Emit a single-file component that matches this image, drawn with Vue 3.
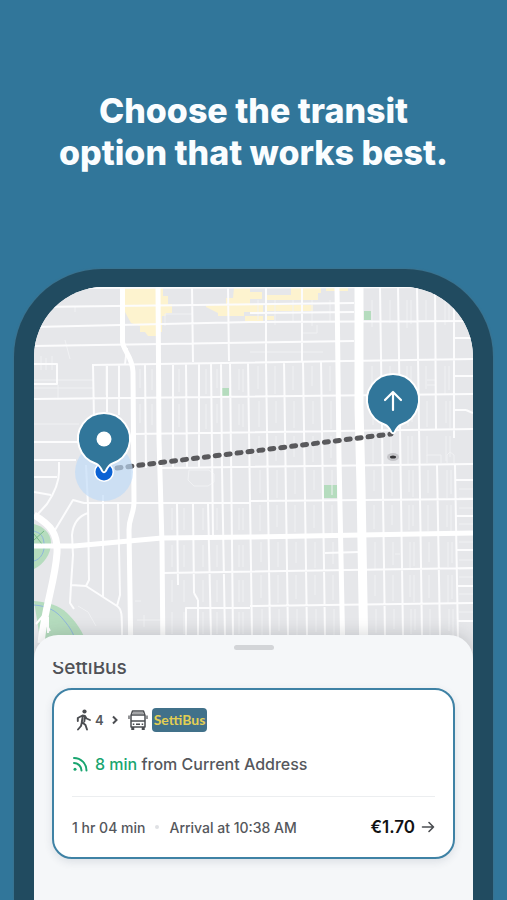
<template>
  <main class="promo">
    <h1 class="headline">Choose the transit<br />option that works best.</h1>

    <div class="phone">
      <div class="screen">
        <!-- Map -->
        <svg class="map" viewBox="34 287 439 372" role="img" aria-label="Route map">
          <rect x="34" y="287" width="439" height="372" fill="#e6e7ea" />

          <!-- Commercial areas -->
          <g fill="#fdf3cf">
            <path d="M125 288h38v8h5v8h4v9h-6v3h-4v16h-6v4h-8l-3-4h-5v-6l-9-3-6-11z" />
            <path d="M234 288h16v18h7v6h-13v4h-26v-3l-12-6v-2h20v-7h7z" />
            <path d="M267 295h24v-7h30v5h-3v7h-51zM267 305h46v6h-46zM250 305h13v7h-13zM245 316h18v5h-18zM267 316h7v4h-7zM326 288h22v3h-22zM250 292h12v7h-12z" />
          </g>

          <!-- Parks -->
          <g fill="#b5dcbe">
            <rect x="222" y="388" width="7" height="8" />
            <rect x="364" y="311" width="7" height="9" />
            <rect x="324" y="485" width="13" height="13" />
            <path d="M34 524c8 2 17 8 17 19s-7 21-17 26z" />
            <path d="M34 601c13 1 25 4 33 12s14 16 18 26H40z" />
          </g>
          <g fill="none" stroke="#8fb6dd" stroke-width="1">
            <path d="M34 561c7-2 11-9 10-18s-5-10-10-12" />
            <path d="M34 605c14 1 22 6 28 13s10 12 13 21" />
          </g>
          <path d="M34 540l10-9m-10 3l8 10" stroke="#77b989" fill="none" />

          <!-- Alleys -->
          <path class="alley" :d="alleys" />
          <path
            class="alley"
            d="M34 424h45M34 388h60M34 380h60M41 356v14M46 358v12M52 356v14M65 340l5 19M75 306v6M58 385v14M106 365v30M165 314h28M165 314v12M303 333h14v-8M250 352h73M189 470h20l5 4v8l-6 4h-14l-6-6zM427 463v-8h14v8M447 463v-8l3-3 4 3v8M427 380h8M427 385h8M78 606l10 6 8 14M137 620h23M144 615v12M395 554h5M135 601h6"
          />

          <!-- Streets -->
          <path class="street" :d="streets" />
          <path
            class="street"
            d="M34 364h23v20H34M34 460h42M34 442h48M59 462v10c0 14-8 26-12 32l-10 11M34 477h23M34 492l17 3M55 530l18-30 11 3h166M88 513c-9 3-15 11-16 22l1 20-2 30M86 465l2 40 1 75-3 6-15-1-1 18 4 6M103 495v102M118 502l2 93-3 11-31-20M117 606c5 3 5 8 5 30M127 348l-2 16M186 636v-28h64"
          />

          <!-- Avenues -->
          <g fill="none" stroke="#fff" stroke-linejoin="round">
            <path d="M122.5 287v55c1 9 10 15 10.500 30l1 130c0 12-5 15-5 28l2 129" stroke-width="5" />
            <path d="M158 287l1 152 3 105 1 115" stroke-width="5" />
            <path d="M337 287l2 170 4 202" stroke-width="5" />
            <path d="M359 287v120l2 80 3 172" stroke-width="9" />
            <path d="M34 546h40l88-8 89-1 110-2 112-2" stroke-width="5" />
            <path d="M34 515c17 10 24 19 23 38-2 29-12 52-16 90" stroke-width="7" />
          </g>
          <path d="M36 624l6-7 8 14M48 617v16" fill="none" stroke="#fff" stroke-width="2" />

          <!-- Route -->
          <path d="M117 468L391 434" stroke="#59595c" stroke-width="5" stroke-linecap="round" stroke-dasharray="4 7" />
          <ellipse cx="393" cy="457" rx="6" ry="4" fill="#a5a5a9" opacity="0.5" />
          <ellipse cx="393" cy="457" rx="3" ry="1.500" fill="#37373a" />

          <!-- Current position -->
          <circle cx="104" cy="472" r="29" fill="#bfdaf7" opacity="0.650" />
          <circle cx="104" cy="472" r="10" fill="#fff" />
          <circle cx="104" cy="472" r="8.500" fill="#0b62d4" />

          <!-- Pins -->
          <g v-for="pin in pins" :key="pin.id" :transform="`translate(${pin.x} ${pin.y})`">
            <path
              d="M-8 24.700A26 26 0 1 1 8 24.700C5 26 3.500 28.500 1.800 32Q0 34.500 -1.800 32C-3.500 28.500 -5 26 -8 24.700Z"
              fill="#31769a"
              stroke="#fff"
              stroke-width="2"
              stroke-linejoin="round"
            />
            <circle v-if="pin.id === 'start'" r="7.500" fill="#fff" />
            <path
              v-else
              d="M0 10V-8M-8 0L0 -8L8 0"
              fill="none"
              stroke="#fff"
              stroke-width="2.200"
              stroke-linecap="round"
              stroke-linejoin="round"
            />
          </g>
        </svg>

        <!-- Bottom sheet -->
        <section class="sheet">
          <button class="handle" aria-label="Resize panel"></button>
          <div class="list-title">
            <h2>SettiBus</h2>
          </div>

          <a class="trip" href="#">
            <div class="legs">
              <svg class="walk" viewBox="0 0 16 22">
                <circle cx="8.500" cy="2.500" r="2.100" fill="#4b4d51" />
                <path
                  d="M1.800 12V9L6.500 6.500L9 7L10.500 9.500L14 11M6.800 7L5.800 13L9.500 16L11 20.500M5.800 13.500L5 17L2 20.500M9 7.500L8.300 12.500"
                  fill="none"
                  stroke="#4b4d51"
                  stroke-width="1.900"
                  stroke-linecap="round"
                  stroke-linejoin="round"
                />
              </svg>
              <span class="walk-time">4</span>
              <svg class="chevron" viewBox="0 0 6 10">
                <path d="M1 1.500L4.500 5L1 8.500" fill="none" stroke="#4b4d51" stroke-width="2" />
              </svg>
              <svg class="bus" viewBox="0 0 20 20" fill="none" stroke="#4b4d51" stroke-width="1.500">
                <path d="M3 17V5.500L4.500 1H15.500L17 5.500V17Z" stroke-linejoin="round" />
                <path d="M3 5H17M3 11H17M8 14.300H12" />
                <path d="M1 5.500V9M19 5.500V9" stroke-width="1.200" />
                <path d="M4 17V19.200H5.500V17M14.500 17V19.200H16V17" />
                <path d="M4.800 14.300H6.300M13.700 14.300H15.200" />
                <path d="M5 3H15" stroke-width="1" />
              </svg>
              <span class="line-badge">SettiBus</span>
            </div>

            <div class="departure">
              <svg class="live" viewBox="0 0 16 16" fill="none" stroke="#18a56f" stroke-width="2">
                <path d="M2 2A12.500 12.500 0 0 1 14.500 14.500M2 7A7.500 7.500 0 0 1 9.500 14.500" stroke-linecap="round" />
                <circle cx="3" cy="13.200" r="1.500" fill="#18a56f" stroke="none" />
              </svg>
              <p><span class="minutes">8 min</span> from Current Address</p>
            </div>

            <div class="summary">
              <span>1 hr 04 min</span>
              <i class="dot"></i>
              <span>Arrival at 10:38 AM</span>
              <strong class="price">€1.70</strong>
              <svg class="arrow" viewBox="0 0 14 14">
                <path
                  d="M1.500 7H12.500M8 2.500L12.500 7L8 11.500"
                  fill="none"
                  stroke="#4b4d51"
                  stroke-width="1.600"
                  stroke-linecap="round"
                  stroke-linejoin="round"
                />
              </svg>
            </div>
          </a>
        </section>
      </div>
    </div>
  </main>
</template>

<script setup>
const pins = [
  { id: 'start', x: 104, y: 439 },
  { id: 'end', x: 393, y: 400 },
]

// [x1, y1, x2, y2]
const segments = [
  // horizontal
  [34, 288, 473, 287], [34, 307, 354, 303], [34, 327, 250, 322], [250, 322, 473, 321],
  [34, 346, 354, 341], [92, 365, 473, 359], [34, 399, 473, 394], [133, 434, 473, 429],
  [160, 468, 473, 464], [250, 501, 473, 499], [163, 573, 473, 568], [250, 606, 473, 603],
  [250, 313, 354, 312], [325, 553, 359, 552],
  // upper blocks
  [192, 287, 193, 362], [228, 287, 229, 361], [266, 287, 266, 361], [302, 287, 302, 361],
  [93, 365, 94, 420], [107, 365, 107, 412], [119, 365, 119, 415],
  [145, 365, 146, 468], [173, 364, 173, 468], [186, 364, 187, 468], [199, 364, 199, 468],
  [211, 363, 213, 536], [221, 363, 222, 468], [230, 362, 233, 636], [248, 362, 252, 636],
  // lower blocks
  [177, 503, 178, 585], [193, 503, 194, 593], [194, 593, 198, 600], [198, 600, 198, 636],
  [208, 503, 211, 636], [222, 468, 225, 636],
  // center to right
  [266, 361, 270, 636], [284, 361, 288, 636], [303, 361, 307, 636], [321, 361, 325, 636],
  [380, 287, 385, 636], [398, 287, 403, 636], [417, 287, 422, 636], [435, 287, 436, 429],
  [437, 465, 440, 636], [454, 287, 454, 438], [455, 465, 458, 640],
  [454, 338, 473, 338], [454, 376, 473, 376], [454, 410, 466, 410], [466, 410, 473, 413],
  [455, 480, 473, 480], [455, 516, 473, 516], [456, 550, 473, 550], [457, 586, 473, 586],
  [457, 621, 473, 621],
]

const streets = segments.map(([a, b, c, d]) => `M${a} ${b}L${c} ${d}`).join('')

const alleyColumns = [
  258, 275, 293, 312, 330, 372, 390, 407, 411, 426, 445, 449,
]
const shortAlleys = [140, 152, 179, 206, 217, 239, 243]

const alleys = [
  ...alleyColumns.flatMap((x, i) =>
    [300, 366, 401, 436, 470, 505, 542, 575, 609].map(
      (y, row) => `M${x + Math.floor(row / 2)} ${y}v${20 + ((i * 5 + row * 3) % 9)}`
    )
  ),
  ...shortAlleys.flatMap((x, i) => [369, 404].map((y) => `M${x} ${y}v${19 + (i % 4) * 2}`)),
  ...[172, 184, 203, 217, 239, 243].flatMap((x) => [508, 545, 580, 612].map((y) => `M${x} ${y}v22`)),
  ...[489, 498, 508, 524, 533, 542, 560, 569, 577, 594, 603, 612].map((y) => `M459 ${y}h14`),
].join('')
</script>

<style>
body {
  margin: 0;
  background: #31769a;
}
</style>

<style scoped>
.promo {
  min-height: 100vh;
  box-sizing: border-box;
  padding: 90px 14px 0;
  display: flex;
  flex-direction: column;
  gap: 95px;
  background: #31769a;
  font-family: Inter, sans-serif;
  overflow: hidden;
}

.headline {
  margin: 0;
  color: #fafdff;
  font-size: 34px;
  font-weight: 800;
  line-height: 42px;
  text-align: center;
}

.phone {
  flex: 1;
  display: flex;
  padding: 18px 20px 0;
  background: #214b60;
  border-radius: 88px 88px 0 0;
  box-shadow: 0 0 2px #4b6c7b;
}

.screen {
  flex: 1;
  min-width: 0;
  display: flex;
  flex-direction: column;
  overflow: hidden;
  background: #f5f7f9;
  border-radius: 70px 70px 0 0;
}

.map {
  display: block;
  width: 100%;
}

.street {
  fill: none;
  stroke: #fcfcfd;
  stroke-width: 2;
  stroke-linejoin: round;
}

.alley {
  fill: none;
  stroke: #f0f1f3;
  stroke-width: 1;
}

/* Bottom sheet */
.sheet {
  position: relative;
  flex: 1;
  margin-top: -24px;
  padding: 10px 18px 40px;
  display: flex;
  flex-direction: column;
  background: #f5f7f9;
  border-radius: 24px 24px 0 0;
  box-shadow: 0 -2px 16px rgba(60, 64, 70, 0.2);
}

.handle {
  align-self: center;
  width: 40px;
  height: 5px;
  padding: 0;
  border: none;
  border-radius: 3px;
  background: #d3d5d8;
}

/* The title is half scrolled under the top of the list */
.list-title {
  height: 16px;
  margin-top: 12px;
  display: flex;
  align-items: flex-end;
  overflow: hidden;
}

.list-title h2 {
  margin: 0;
  color: #505257;
  font-size: 19px;
  font-weight: 500;
  line-height: 20px;
}

.trip {
  display: block;
  margin-top: 10px;
  padding: 18px;
  border: 2px solid #3f82a5;
  border-radius: 20px;
  background: #fff;
  box-shadow: 0 3px 8px rgba(40, 60, 80, 0.12);
  color: #55575c;
  text-decoration: none;
}

.legs,
.departure,
.summary {
  display: flex;
  align-items: center;
  height: 24px;
}

.walk {
  width: 16px;
  height: 22px;
  margin-left: 4px;
}

.walk-time {
  margin-left: 3px;
  font-size: 13px;
  font-weight: 600;
}

.chevron {
  width: 6px;
  height: 10px;
  margin: 0 10px 0 8px;
}

.bus {
  width: 20px;
  height: 20px;
}

.line-badge {
  margin-left: 4px;
  padding: 0 2px;
  border-radius: 4px;
  background: #41718a;
  color: #e3cf53;
  font-family: Lato, sans-serif;
  font-size: 14px;
  font-weight: 700;
  line-height: 24px;
}

.departure {
  margin-top: 20px;
  gap: 7px;
}

.departure p {
  margin: 0;
  font-size: 16px;
  font-weight: 500;
}

.live {
  width: 16px;
  height: 16px;
}

.minutes {
  color: #18a56f;
}

.summary {
  margin-top: 20px;
  padding-top: 18px;
  border-top: 1px solid #eceef0;
  font-size: 14px;
  font-weight: 500;
}

.dot {
  width: 4px;
  height: 4px;
  margin: 0 10px;
  border-radius: 50%;
  background: #dfe1e4;
}

.price {
  margin-left: auto;
  color: #111214;
  font-size: 17px;
  font-weight: 600;
}

.arrow {
  width: 14px;
  height: 14px;
  margin-left: 6px;
}
</style>
